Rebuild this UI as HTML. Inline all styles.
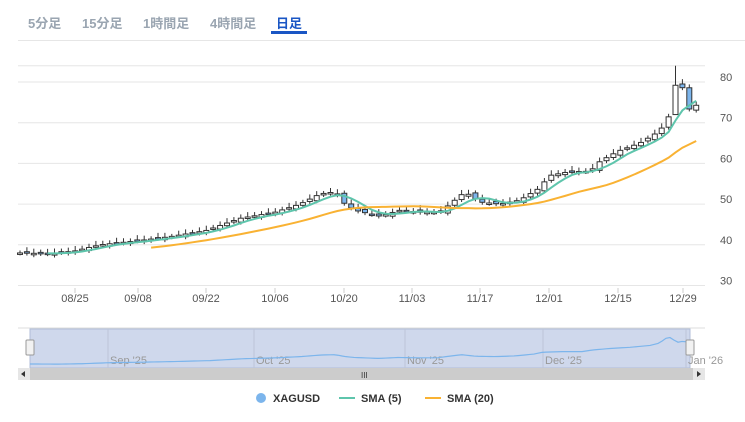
<!DOCTYPE html><html><head><meta charset="utf-8"><style>
body{margin:0;width:745px;height:422px;background:#fff;font-family:"Liberation Sans","Noto Sans CJK JP",sans-serif;overflow:hidden;position:relative}
.tab{position:absolute;top:13px;font-size:13px;font-weight:bold;color:#9aa5b1}
</style></head><body>
<div class="tab" style="left:28px">5分足</div>
<div class="tab" style="left:82px">15分足</div>
<div class="tab" style="left:143px">1時間足</div>
<div class="tab" style="left:210px">4時間足</div>
<div class="tab" style="left:276px;color:#1a56c4">日足</div>
<div style="position:absolute;left:271px;top:31px;width:36px;height:3px;background:#1a56c4"></div>
<div style="position:absolute;left:18px;top:40px;width:727px;height:1px;background:#e6e6e6"></div>
<svg id="s" width="745" height="422" style="position:absolute;left:0;top:0" font-family="Liberation Sans, sans-serif"></svg>
<script>
(function(){
var s=document.getElementById('s'),h='';
function Y(v){return 82+(80-v)*4.07}
for(var v=30;v<=80;v+=10){var y=Y(v);h+='<line x1="18" x2="705" y1="'+y+'" y2="'+y+'" stroke="#e6e6e6"/><text x="720" y="'+(y-1)+'" font-size="11" fill="#555">'+v+'</text>';}
h+='<line x1="18" x2="705" y1="'+(Y(84))+'" y2="'+Y(84)+'" stroke="#e6e6e6"/>';
var dl=[[75,'08/25'],[138,'09/08'],[206,'09/22'],[275,'10/06'],[344,'10/20'],[412,'11/03'],[480,'11/17'],[549,'12/01'],[618,'12/15'],[683,'12/29']];
dl.forEach(function(d){h+='<line x1="'+d[0]+'" x2="'+d[0]+'" y1="288" y2="293" stroke="#ccc"/><text x="'+d[0]+'" y="302" font-size="11" fill="#555" text-anchor="middle">'+d[1]+'</text>'});
var kp=[[20,38],[50,37.8],[75,38.5],[100,40],[138,41],[170,42],[206,43.5],[240,46.5],[275,48],[300,50],[320,52.5],[335,53],[345,50],[355,48.5],[380,47],[400,48.5],[420,48],[440,48],[455,51],[465,53],[480,50.5],[500,50],[520,51],[540,54],[549,57],[570,58],[590,58],[600,60.5],[618,63],[640,65],[660,68],[670,72],[675,79],[680,81],[688,73],[695,75],[700,72]];
function P(x){for(var i=1;i<kp.length;i++)if(x<=kp[i][0]){var a=kp[i-1],b=kp[i];return a[1]+(b[1]-a[1])*(x-a[0])/(b[0]-a[0]);}return 72}
var xs=[],cl=[];for(var x=20;x<=701;x+=6.9){xs.push(x);cl.push(P(x));}
var s5=[],s20=[];
for(var i=0;i<xs.length;i++){var x=xs[i],c=cl[i],o=i?cl[i-1]:c,r=Math.sin(i*2.3)*0.4;o+=r;var hi=Math.max(o,c)+0.6+Math.abs(Math.sin(i))*0.6,lo=Math.min(o,c)-0.6;
if(x>675&&x<682){hi=84;lo=72;o=72;}
var ty=Y(Math.max(o,c)),bh=Math.max(1.5,Math.abs(Y(o)-Y(c)));var blue=c<o;
h+='<line x1="'+x+'" x2="'+x+'" y1="'+Y(hi)+'" y2="'+Y(lo)+'" stroke="#333"/><rect x="'+(x-2.5)+'" y="'+ty+'" width="5" height="'+bh+'" fill="'+(blue?'#7cb5ec':'#fff')+'" stroke="#333" stroke-width="1"/>';
if(i>=4){var a=0;for(var j=i-4;j<=i;j++)a+=cl[j];s5.push(x+','+Y(a/5));}
if(i>=19){var a=0;for(var j=i-19;j<=i;j++)a+=cl[j];s20.push(x+','+Y(a/20));}}
h+='<polyline points="'+s5.join(' ')+'" fill="none" stroke="#5ec5ac" stroke-width="2"/><polyline points="'+s20.join(' ')+'" fill="none" stroke="#f9b233" stroke-width="2"/>';
h+='<line x1="18" x2="705" y1="328" y2="328" stroke="#ddd"/><rect x="30" y="329" width="660" height="39" fill="#cfd8ec" stroke="#b0bdd8"/>';
[['Sep \'25',110],['Oct \'25',256],['Nov \'25',407],['Dec \'25',545],['Jan \'26',688]].forEach(function(d){h+='<line x1="'+(d[1]-2)+'" x2="'+(d[1]-2)+'" y1="329" y2="368" stroke="#bcc5d8"/><text x="'+d[1]+'" y="364" font-size="11" fill="#999">'+d[0]+'</text>'});
var np=[];for(var x=30;x<=690;x+=4){var px=20+(x-30)*681/660;np.push(x+','+(364-(P(px)-38)*0.62));}
h+='<polyline points="'+np.join(' ')+'" fill="none" stroke="#7cb5ec" stroke-width="1.2"/>';
h+='<rect x="26" y="340" width="8" height="15" fill="#f2f2f2" stroke="#999" rx="1"/><rect x="686" y="340" width="8" height="15" fill="#f2f2f2" stroke="#999" rx="1"/>';
h+='<rect x="18" y="368" width="687" height="12" fill="#ccc"/><rect x="18" y="368" width="12" height="12" fill="#e6e6e6"/><rect x="693" y="368" width="12" height="12" fill="#e6e6e6"/><path d="M25,371 L21,374 L25,377Z M697,371 L701,374 L697,377Z" fill="#333"/><text x="361" y="378" font-size="8" fill="#333">III</text>';
h+='<circle cx="261" cy="398" r="5" fill="#7cb5ec"/><text x="273" y="402" font-size="11" fill="#333" font-weight="bold">XAGUSD</text>';
h+='<line x1="339" x2="355" y1="398" y2="398" stroke="#5ec5ac" stroke-width="2"/><text x="361" y="402" font-size="11" fill="#333" font-weight="bold">SMA (5)</text>';
h+='<line x1="425" x2="441" y1="398" y2="398" stroke="#f9b233" stroke-width="2"/><text x="447" y="402" font-size="11" fill="#333" font-weight="bold">SMA (20)</text>';
s.innerHTML=h;
})();
</script></body></html>
